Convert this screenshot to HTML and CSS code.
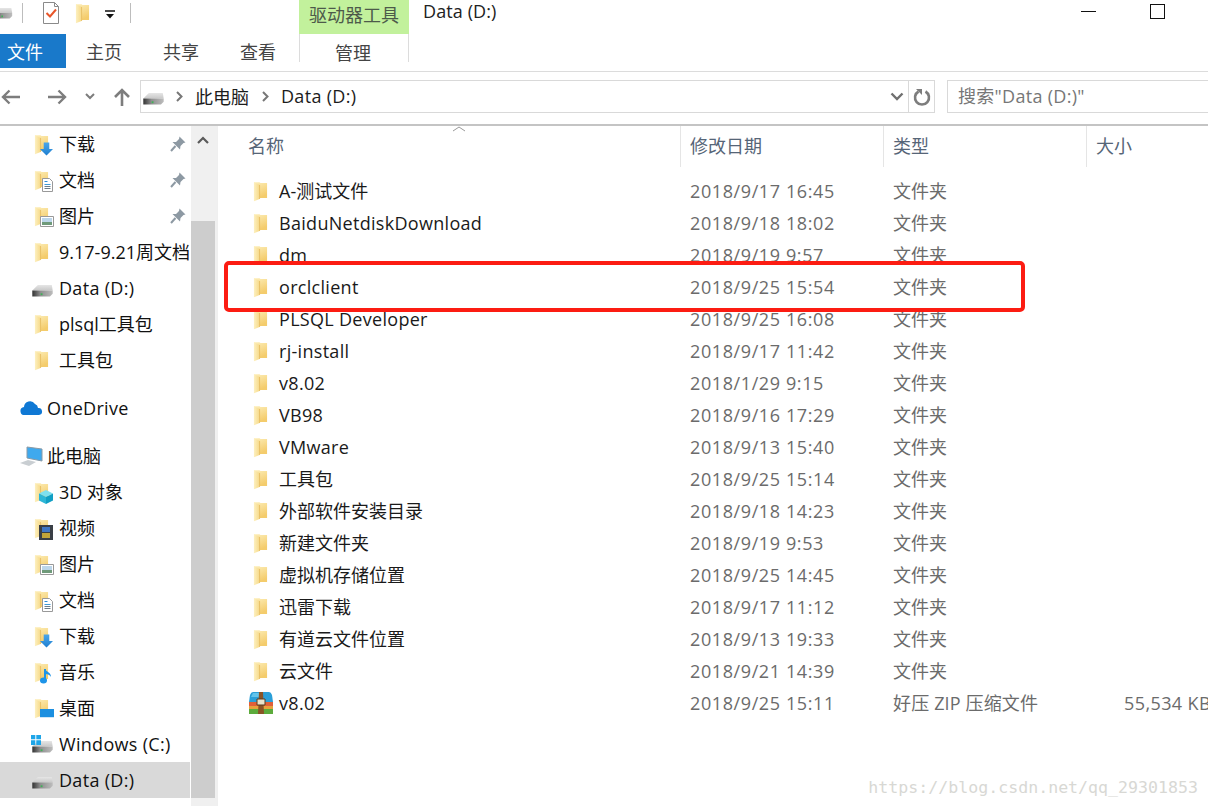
FILE: index.html
```html
<!DOCTYPE html>
<html lang="zh-CN">
<head>
<meta charset="utf-8">
<title>Data (D:)</title>
<link rel="stylesheet" href="styles.css">
</head>
<body>
<svg class="defs" width="0" height="0" aria-hidden="true">
  <defs>
    <linearGradient id="fg" x1="0" y1="0" x2="0.4" y2="1">
      <stop offset="0" stop-color="#fdefba"/><stop offset="1" stop-color="#f4cc6c"/>
    </linearGradient>
    <linearGradient id="ff" x1="0" y1="0" x2="1" y2="0">
      <stop offset="0" stop-color="#fdf0c0"/><stop offset="1" stop-color="#f6d988"/>
    </linearGradient>
    <linearGradient id="df" x1="0" y1="0" x2="1" y2="0">
      <stop offset="0" stop-color="#333"/><stop offset="0.4" stop-color="#8f8f8f"/><stop offset="1" stop-color="#bdbdbd"/>
    </linearGradient>
    <linearGradient id="dt" x1="0" y1="0" x2="0" y2="1">
      <stop offset="0" stop-color="#e6e6e6"/><stop offset="1" stop-color="#c8c8c8"/>
    </linearGradient>
    <linearGradient id="ar" x1="0" y1="0" x2="0" y2="1">
      <stop offset="0" stop-color="#4aa6ea"/><stop offset="1" stop-color="#1f7fd0"/>
    </linearGradient>
    <symbol id="folder" viewBox="0 0 16 22">
      <path d="M1 1h6l1 1h7v16H7z" fill="url(#fg)"/>
      <path d="M1 1l6 3v15l-6 2.500z" fill="url(#ff)"/>
      <path d="M7 4v15" stroke="#e9c064" stroke-width="1"/>
    </symbol>
    <symbol id="drive" viewBox="0 0 24 14">
      <path d="M1 7 7 1h15l1 6z" fill="url(#dt)"/>
      <path d="M1 7h22v3.500L20 13.500H1z" fill="url(#df)"/>
      <path d="M10 10h2v2h-2z" fill="#3fb257"/>
    </symbol>
    <symbol id="pin" viewBox="0 0 16 16">
      <path d="M9.500.5 15.500 6.500 13.500 7l-3 3-.5 3.500-7.500-7.500L6 6l3-3z" fill="#8d99a3"/>
      <path d="M5.500 10 1 15" stroke="#8d99a3" stroke-width="2" fill="none"/>
    </symbol>
    <symbol id="dl" viewBox="0 0 14 14"><path d="M4 0h6v7h4l-7 7-7-7h4z" fill="url(#ar)"/></symbol>
    <symbol id="doc" viewBox="0 0 11 14"><path d="M.5.5h7l3 3v10H.5z" fill="#fff" stroke="#999"/><path d="M2.500 3.500h3" stroke="#2a8bd6"/><path d="M2.500 6.500h6" stroke="#3f9ad8"/><path d="M2.500 8.500h6M2.500 10.500h6" stroke="#6b7d8a"/></symbol>
    <symbol id="pic" viewBox="0 0 14 11"><path d="M.5.500h13v10H.5z" fill="#fff" stroke="#999"/><path d="M2 2h10v4H2z" fill="#bcd6ea"/><path d="M2 6h10v3H2z" fill="#6f9a7a"/></symbol>
  </defs>
</svg>

<div class="window">
  <header class="titlebar">
    <div class="qat">
      <svg class="qat-drive" width="20" height="14"><use href="#drive"/></svg>
      <span class="qat-sep"></span>
      <svg class="qat-check" width="18" height="24" viewBox="0 0 18 24">
        <path d="M1.500 1.500h11l4 4v17h-15z" fill="#fff" stroke="#8a8a8a"/>
        <path d="M12.500 1.500v4h4" fill="none" stroke="#8a8a8a"/>
        <path d="M4.500 12l3.500 3.500 6-7" fill="none" stroke="#e8562a" stroke-width="2"/>
      </svg>
      <svg class="qat-folder" width="15" height="21"><use href="#folder"/></svg>
      <svg class="qat-down" width="10" height="9" viewBox="0 0 10 9"><path d="M0 1h10" stroke="#111" stroke-width="1.500"/><path d="M1 4h8L5 8.500z" fill="#111"/></svg>
      <span class="qat-sep qat-sep-end"></span>
    </div>
    <div class="tool-tab">驱动器工具</div>
    <div class="title">Data (D:)</div>
    <div class="winctl">
      <span class="win-min"></span>
      <span class="win-max"></span>
    </div>
  </header>

  <nav class="ribbon">
    <div class="tab tab-file">文件</div>
    <div class="tab tab-home">主页</div>
    <div class="tab tab-share">共享</div>
    <div class="tab tab-view">查看</div>
    <div class="tab tab-manage">管理</div>
  </nav>

  <div class="addressbar">
    <div class="navbtns">
      <svg width="20" height="16" viewBox="0 0 20 16"><path d="M19 8H2M8.500 1.500 2 8l6.500 6.500" fill="none" stroke="#7d7d7d" stroke-width="2.400"/></svg>
      <svg class="nav-fwd" width="20" height="16" viewBox="0 0 20 16"><path d="M1 8h17M11.500 1.500 18 8l-6.500 6.500" fill="none" stroke="#7d7d7d" stroke-width="2.400"/></svg>
      <svg class="nav-more" width="10" height="7" viewBox="0 0 10 7"><path d="M1 1l4 4 4-4" fill="none" stroke="#7d7d7d" stroke-width="2"/></svg>
      <svg class="nav-up" width="18" height="18" viewBox="0 0 18 18"><path d="M9 18V3M2 9l7-7 7 7" fill="none" stroke="#7d7d7d" stroke-width="2.600"/></svg>
    </div>
    <div class="pathbox">
      <svg class="path-drive" width="23" height="13"><use href="#drive"/></svg>
      <svg class="crumb-arrow" width="7" height="11" viewBox="0 0 7 11"><path d="M1 1l4.500 4.500L1 10" fill="none" stroke="#777" stroke-width="2"/></svg>
      <span class="crumb">此电脑</span>
      <svg class="crumb-arrow" width="7" height="11" viewBox="0 0 7 11"><path d="M1 1l4.500 4.500L1 10" fill="none" stroke="#777" stroke-width="2"/></svg>
      <span class="crumb latin">Data (D:)</span>
      <svg class="path-drop" width="14" height="9" viewBox="0 0 14 9"><path d="M1.500 1.500 7 7l5.500-5.500" fill="none" stroke="#707070" stroke-width="2.400"/></svg>
      <span class="refresh">
        <svg width="18" height="18" viewBox="0 0 18 18"><path d="M5.500 3.500a7 7 0 1 0 7 0" fill="none" stroke="#7d7d7d" stroke-width="2.600"/><path d="M3 1h6v6z" fill="#7d7d7d"/></svg>
      </span>
    </div>
    <div class="searchbox latin">搜索"Data (D:)"</div>
  </div>

  <main class="body">
    <aside class="sidebar">
      <div class="navrow"><span class="ico"><svg width="15" height="21"><use href="#folder"/></svg><svg class="badge" width="13" height="14"><use href="#dl"/></svg></span><span class="cjk">下载</span><svg class="pin" width="16" height="16"><use href="#pin"/></svg></div>
      <div class="navrow"><span class="ico"><svg width="15" height="21"><use href="#folder"/></svg><svg class="badge" width="11" height="14"><use href="#doc"/></svg></span><span class="cjk">文档</span><svg class="pin" width="16" height="16"><use href="#pin"/></svg></div>
      <div class="navrow"><span class="ico"><svg width="15" height="21"><use href="#folder"/></svg><svg class="badge badge-pic" width="14" height="11"><use href="#pic"/></svg></span><span class="cjk">图片</span><svg class="pin" width="16" height="16"><use href="#pin"/></svg></div>
      <div class="navrow"><span class="ico"><svg width="15" height="21"><use href="#folder"/></svg></span><span class="cjk">9.17-9.21周文档</span></div>
      <div class="navrow"><span class="ico ico-drive"><svg width="23" height="13"><use href="#drive"/></svg></span><span class="latin">Data (D:)</span></div>
      <div class="navrow"><span class="ico"><svg width="15" height="21"><use href="#folder"/></svg></span><span class="cjk">plsql工具包</span></div>
      <div class="navrow"><span class="ico"><svg width="15" height="21"><use href="#folder"/></svg></span><span class="cjk">工具包</span></div>

      <div class="navrow navtop navgap"><span class="ico ico-top"><svg width="23" height="14" viewBox="0 0 23 14"><path d="M5 14a4 4 0 0 1-1-8 6 6 0 0 1 11-3 4.500 4.500 0 0 1 3 4 3.500 3.500 0 0 1 1 7z" fill="#0f78d4"/></svg></span><span class="latin">OneDrive</span></div>
      <div class="navrow navtop navgap"><span class="ico ico-top"><svg class="pc" width="24" height="20" viewBox="0 0 24 20"><path d="M8 1l15 2v12L8 12z" fill="#3fa9ee" stroke="#8a9aa6"/><path d="M1 17l8-3 8 2-7 4z" fill="#c9ced2"/></svg></span><span class="cjk">此电脑</span></div>
      <div class="navrow"><span class="ico"><svg width="15" height="21"><use href="#folder"/></svg><svg class="badge" width="14" height="14" viewBox="0 0 14 14"><path d="M7 0l7 3.500-7 3.500L0 3.500z" fill="#7fe0ee"/><path d="M0 3.500 7 7v7L0 10.500z" fill="#2db6d6"/><path d="M14 3.500 7 7v7l7-3.500z" fill="#119fc4"/></svg></span><span class="cjk">3D 对象</span></div>
      <div class="navrow"><span class="ico"><svg width="15" height="21"><use href="#folder"/></svg><svg class="badge" width="14" height="15" viewBox="0 0 14 15"><path d="M0 0h14v15H0z" fill="#3a3f46"/><path d="M3 2h8v5H3z" fill="#3f76c4"/><path d="M3 8h8v5H3z" fill="#c2a53a"/></svg></span><span class="cjk">视频</span></div>
      <div class="navrow"><span class="ico"><svg width="15" height="21"><use href="#folder"/></svg><svg class="badge badge-pic" width="14" height="11"><use href="#pic"/></svg></span><span class="cjk">图片</span></div>
      <div class="navrow"><span class="ico"><svg width="15" height="21"><use href="#folder"/></svg><svg class="badge" width="11" height="14"><use href="#doc"/></svg></span><span class="cjk">文档</span></div>
      <div class="navrow"><span class="ico"><svg width="15" height="21"><use href="#folder"/></svg><svg class="badge" width="13" height="14"><use href="#dl"/></svg></span><span class="cjk">下载</span></div>
      <div class="navrow"><span class="ico"><svg width="15" height="21"><use href="#folder"/></svg><svg class="badge badge-note" width="12" height="16" viewBox="0 0 12 16"><path d="M5 1v11" stroke="#1e94e8" stroke-width="2"/><ellipse cx="3.500" cy="12.500" rx="3.500" ry="3" fill="#1e94e8"/><path d="M5 1c1 3 6 3 6 8-1-2-3-3-6-3z" fill="#1e94e8"/></svg></span><span class="cjk">音乐</span></div>
      <div class="navrow"><span class="ico"><svg width="15" height="21"><use href="#folder"/></svg><svg class="badge badge-pic" width="14" height="10" viewBox="0 0 14 10"><path d="M0 0h14v9H0z" fill="#1c8fe0"/><path d="M0 8.500h14" stroke="#cfe6f6"/></svg></span><span class="cjk">桌面</span></div>
      <div class="navrow"><span class="ico ico-drive"><svg width="23" height="13"><use href="#drive"/></svg><svg class="winlogo" width="10" height="10" viewBox="0 0 10 10"><path d="M0 0h4.300v4.300H0zM5.300 0h4.700v4.300H5.300zM0 5.300h4.300V10H0zM5.300 5.300h4.700V10H5.300z" fill="#1ea5e8"/></svg></span><span class="latin">Windows (C:)</span></div>
      <div class="navrow selected"><span class="ico ico-drive"><svg width="23" height="13"><use href="#drive"/></svg></span><span class="latin">Data (D:)</span></div>
    </aside>

    <div class="scrollbar">
      <div class="sb-up"><svg width="12" height="8" viewBox="0 0 12 8"><path d="M1 7l5-5 5 5" fill="none" stroke="#5a5a5a" stroke-width="2.200"/></svg></div>
      <div class="sb-thumb"></div>
    </div>

    <section class="files">
      <div class="sortcaret"><svg width="14" height="6" viewBox="0 0 14 6"><path d="M1 5l6-4 6 4" fill="none" stroke="#9a9a9a"/></svg></div>
      <div class="headrow">
        <div class="hcell hname">名称</div>
        <div class="hcell">修改日期</div>
        <div class="hcell">类型</div>
        <div class="hcell">大小</div>
      </div>
      <div class="rows">
        <div class="row"><span class="fname"><svg width="15" height="21"><use href="#folder"/></svg><span class="cjk">A-测试文件</span></span><span class="cell cdate">2018/9/17 16:45</span><span class="cell cjk">文件夹</span></div>
        <div class="row"><span class="fname"><svg width="15" height="21"><use href="#folder"/></svg><span class="latin">BaiduNetdiskDownload</span></span><span class="cell cdate">2018/9/18 18:02</span><span class="cell cjk">文件夹</span></div>
        <div class="row"><span class="fname"><svg width="15" height="21"><use href="#folder"/></svg><span class="latin">dm</span></span><span class="cell cdate">2018/9/19 9:57</span><span class="cell cjk">文件夹</span></div>
        <div class="row"><span class="fname"><svg width="15" height="21"><use href="#folder"/></svg><span class="latin">orclclient</span></span><span class="cell cdate">2018/9/25 15:54</span><span class="cell cjk">文件夹</span></div>
        <div class="row"><span class="fname"><svg width="15" height="21"><use href="#folder"/></svg><span class="latin">PLSQL Developer</span></span><span class="cell cdate">2018/9/25 16:08</span><span class="cell cjk">文件夹</span></div>
        <div class="row"><span class="fname"><svg width="15" height="21"><use href="#folder"/></svg><span class="latin">rj-install</span></span><span class="cell cdate">2018/9/17 11:42</span><span class="cell cjk">文件夹</span></div>
        <div class="row"><span class="fname"><svg width="15" height="21"><use href="#folder"/></svg><span class="latin">v8.02</span></span><span class="cell cdate">2018/1/29 9:15</span><span class="cell cjk">文件夹</span></div>
        <div class="row"><span class="fname"><svg width="15" height="21"><use href="#folder"/></svg><span class="latin">VB98</span></span><span class="cell cdate">2018/9/16 17:29</span><span class="cell cjk">文件夹</span></div>
        <div class="row"><span class="fname"><svg width="15" height="21"><use href="#folder"/></svg><span class="latin">VMware</span></span><span class="cell cdate">2018/9/13 15:40</span><span class="cell cjk">文件夹</span></div>
        <div class="row"><span class="fname"><svg width="15" height="21"><use href="#folder"/></svg><span class="cjk">工具包</span></span><span class="cell cdate">2018/9/25 15:14</span><span class="cell cjk">文件夹</span></div>
        <div class="row"><span class="fname"><svg width="15" height="21"><use href="#folder"/></svg><span class="cjk">外部软件安装目录</span></span><span class="cell cdate">2018/9/18 14:23</span><span class="cell cjk">文件夹</span></div>
        <div class="row"><span class="fname"><svg width="15" height="21"><use href="#folder"/></svg><span class="cjk">新建文件夹</span></span><span class="cell cdate">2018/9/19 9:53</span><span class="cell cjk">文件夹</span></div>
        <div class="row"><span class="fname"><svg width="15" height="21"><use href="#folder"/></svg><span class="cjk">虚拟机存储位置</span></span><span class="cell cdate">2018/9/25 14:45</span><span class="cell cjk">文件夹</span></div>
        <div class="row"><span class="fname"><svg width="15" height="21"><use href="#folder"/></svg><span class="cjk">迅雷下载</span></span><span class="cell cdate">2018/9/17 11:12</span><span class="cell cjk">文件夹</span></div>
        <div class="row"><span class="fname"><svg width="15" height="21"><use href="#folder"/></svg><span class="cjk">有道云文件位置</span></span><span class="cell cdate">2018/9/13 19:33</span><span class="cell cjk">文件夹</span></div>
        <div class="row"><span class="fname"><svg width="15" height="21"><use href="#folder"/></svg><span class="cjk">云文件</span></span><span class="cell cdate">2018/9/21 14:39</span><span class="cell cjk">文件夹</span></div>
        <div class="row"><span class="fname fname-zip"><svg width="26" height="24" viewBox="0 0 26 24"><path d="M5 1h16q2 0 3 3l1 7H1l1-7q1-3 3-3z" fill="#2a9fd8"/><path d="M5 2h6v4H3z" fill="#62c4ec"/><path d="M1 11h24v4H1z" fill="#e0603a"/><path d="M1 15h24v3H1z" fill="#e8a13c"/><path d="M1 18h24v5H1z" fill="#5cab3c"/><path d="M11 1h4l1 22h-6z" fill="#8a5426"/><path d="M9 8h8v6H9z" fill="#e8e2cc" stroke="#5a3a1c"/></svg><span class="latin">v8.02</span></span><span class="cell cdate">2018/9/25 15:11</span><span class="cell cjk czip">好压 ZIP 压缩文件</span><span class="cell csize">55,534 KB</span></div>
      </div>
      <div class="highlight"></div>
      <div class="watermark">https://blog.csdn.net/qq_29301853</div>
    </section>
  </main>
</div>
</body>
</html>
```

FILE: styles.css
```css
* { box-sizing: border-box; }
html, body { margin: 0; height: 100%; overflow: hidden; background: #fff; }
body {
  font-family: "Open Sans", "Noto Sans CJK SC", sans-serif;
  font-size: 18px;
  color: #111;
}
.defs { position: absolute; }
svg { display: block; flex: none; }
.latin { letter-spacing: 0.3px; }
.cjk { padding-bottom: 2px; }

.window { width: 1208px; height: 806px; display: flex; flex-direction: column; overflow: hidden; }

.titlebar { height: 34px; display: flex; flex: none; }
.qat { width: 306px; display: flex; align-items: center; padding-bottom: 8px; margin-left: -7px; }
.qat-drive { margin-right: 9px; }
.qat-sep { width: 1px; height: 20px; background: #bdbdbd; }
.qat-check { margin-left: 19px; }
.qat-folder { margin-left: 15px; }
.qat-down { margin-left: 15px; margin-top: 3px; }
.qat-sep-end { margin-left: 15px; }
.tool-tab {
  width: 110px; background: #c2f19c; color: #4d5a4a;
  display: flex; align-items: center; justify-content: center;
  padding-bottom: 6px;
}
.title { margin-left: 14px; line-height: 22px; color: #222; letter-spacing: 0.1px; }
.winctl { margin-left: auto; display: flex; width: 127px; align-items: flex-start; }
.win-min { width: 15px; height: 1px; background: #111; margin-top: 11px; }
.win-max { width: 15px; height: 15px; border: 1px solid #111; margin-top: 4px; margin-left: 54px; }

.ribbon { height: 38px; display: flex; flex: none; border-bottom: 1px solid #dcdcdc; }
.tab { height: 34px; display: flex; align-items: center; justify-content: center; color: #444; }
.tab-file { width: 66px; background: #1979ca; color: #fff; padding-right: 16px; }
.tab-home { margin-left: 20px; width: 36px; }
.tab-share { margin-left: 41px; width: 36px; }
.tab-view { margin-left: 41px; width: 36px; }
.tab-manage {
  margin-left: 23px; width: 110px; height: 28px; padding-top: 8px; padding-right: 2px;
  border-left: 1px solid #dcdcdc; border-right: 1px solid #dcdcdc;
}

.addressbar { height: 54px; flex: none; display: flex; align-items: center; border-bottom: 2px solid #c4c4c4; padding-bottom: 3px; }
.navbtns { width: 140px; flex: none; display: flex; align-items: center; padding-left: 1px; }
.nav-fwd { margin-left: 26px; }
.nav-more { margin-left: 18px; }
.nav-up { margin-left: 18px; }
.pathbox {
  width: 795px; height: 33px; flex: none; border: 1px solid #d9d9d9;
  display: flex; align-items: center; padding-left: 1px;
}
.path-drive { margin-right: 11px; margin-top: 4px; }
.crumb-arrow { margin-right: 12px; }
.crumb { margin-right: 13px; color: #1c1c1c; padding-bottom: 2px; }
.path-drop { margin-left: auto; margin-right: 4px; }
.refresh { width: 26px; height: 100%; border-left: 1px solid #d9d9d9; display: flex; align-items: center; justify-content: center; flex: none; }
.searchbox {
  margin-left: 12px; flex: 1; min-width: 0; height: 33px; border: 1px solid #d9d9d9; border-right: none;
  padding-left: 10px; line-height: 30px; color: #777; white-space: nowrap;
}

.body { flex: 1; min-height: 0; display: flex; }
.sidebar { width: 190px; flex: none; overflow: hidden; }
.navrow {
  height: 36px; display: flex; align-items: center; white-space: nowrap; padding-left: 34px;
  color: #111; position: relative;
}
.navtop { padding-left: 20px; }
.navgap { margin-top: 12px; }
.ico { width: 25px; flex: none; position: relative; display: block; }
.ico-top { width: 27px; }
.pc { margin-left: -1px; }
.ico-drive { margin-left: -3px; width: 28px; padding-top: 4px; }
.badge { position: absolute; right: 6px; bottom: -1px; }
.badge-pic { right: 5px; bottom: 0; }
.badge-note { right: 7px; }
.winlogo { position: absolute; left: 0; top: -1px; }
.pin { position: absolute; left: 170px; top: 10px; }
.selected { background: #d9d9d9; }

.scrollbar { width: 27px; flex: none; background: #f0f0f0; border-left: 1px solid #fff; border-right: 2px solid #f0f0f0; display: flex; flex-direction: column; }
.sb-up { height: 95px; display: flex; justify-content: center; padding-top: 10px; }
.sb-thumb { height: 577px; background: #cdcdcd; }

.files { flex: 1; min-width: 0; position: relative; padding-left: 1px; border-left: 1px solid #efefef; }
.headrow {
  display: grid; grid-template-columns: 461px 203px 203px 1fr; height: 40px;
  color: #566577;
}
.hcell { padding-left: 9px; line-height: 41px; border-left: 1px solid #e5e5e5; }
.hname { padding-left: 29px; border-left: none; }
.sortcaret { position: absolute; left: 234px; top: 0; }
.rows { padding-top: 9px; }
.row {
  display: grid; grid-template-columns: 461px 203px 203px 1fr; height: 32px; align-items: center;
  white-space: nowrap;
}
.fname { display: flex; align-items: center; padding-left: 34px; color: #1a1a1a; }
.fname svg { margin-right: 11px; }
.fname-zip { padding-left: 29px; }
.fname-zip svg { margin-right: 5px; }
.cell { padding-left: 10px; color: #6b6b6b; }
.cdate { letter-spacing: 0.6px; }
.czip { letter-spacing: 0.15px; }
.csize { padding-left: 38px; letter-spacing: 0.4px; }
.highlight {
  position: absolute; left: 6px; top: 135px; width: 801px; height: 51px;
  border: 4px solid #fc1c12; border-radius: 5px;
}
.watermark {
  position: absolute; right: 10px; bottom: 9px;
  font-family: "DejaVu Sans Mono", monospace; font-size: 16.600px; color: #d8d8d4; white-space: nowrap;
}
```
